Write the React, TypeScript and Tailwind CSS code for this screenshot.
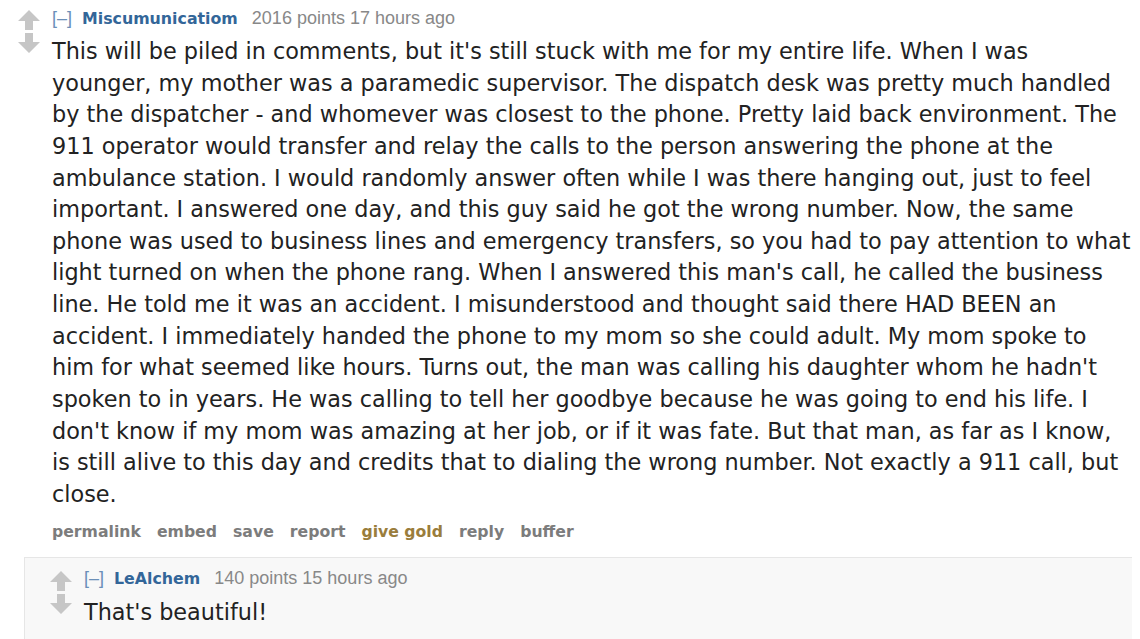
import React from "react";

const body = [
  "This will be piled in comments, but it's still stuck with me for my entire life. When I was",
  "younger, my mother was a paramedic supervisor. The dispatch desk was pretty much handled",
  "by the dispatcher - and whomever was closest to the phone. Pretty laid back environment. The",
  "911 operator would transfer and relay the calls to the person answering the phone at the",
  "ambulance station. I would randomly answer often while I was there hanging out, just to feel",
  "important. I answered one day, and this guy said he got the wrong number. Now, the same",
  "phone was used to business lines and emergency transfers, so you had to pay attention to what",
  "light turned on when the phone rang. When I answered this man's call, he called the business",
  "line. He told me it was an accident. I misunderstood and thought said there HAD BEEN an",
  "accident. I immediately handed the phone to my mom so she could adult. My mom spoke to",
  "him for what seemed like hours. Turns out, the man was calling his daughter whom he hadn't",
  "spoken to in years. He was calling to tell her goodbye because he was going to end his life. I",
  "don't know if my mom was amazing at her job, or if it was fate. But that man, as far as I know,",
  "is still alive to this day and credits that to dialing the wrong number. Not exactly a 911 call, but",
  "close.",
];

const buttons = ["permalink", "embed", "save", "report", "give gold", "reply", "buffer"];

const Arrow = ({ down }: { down?: boolean }) => (
  <svg width="22" height="20" viewBox="0 0 22 20" className={down ? "rotate-180" : ""}>
    <path d="M11 0 L22 11 L15 11 L15 20 L7 20 L7 11 L0 11 Z" fill="#c6c6c6" />
  </svg>
);

const Votes = () => (
  <div className="flex flex-col items-center gap-[3px] w-[22px]">
    <Arrow />
    <Arrow down />
  </div>
);

const Tagline = ({ user, points, time }: { user: string; points: string; time: string }) => (
  <div className="flex items-baseline text-[18px] leading-[20px] font-['Liberation_Sans',sans-serif]">
    <span className="text-[#6b8fb8] mr-[10px]">[–]</span>
    <span className="text-[#336699] font-bold mr-[14px] font-['DejaVu_Sans',sans-serif] text-[15.8px]">{user}</span>
    <span className="text-[#888]">
      {points} points {time}
    </span>
  </div>
);

export default function App() {
  return (
    <div className="w-[1140px] h-[639px] bg-white overflow-hidden text-[#222]">
      <div className="flex pl-[18px] pt-[8px]">
        <div className="pt-[2px]">
          <Votes />
        </div>
        <div className="ml-[12px] flex-1">
          <Tagline user="Miscumunicatiom" points="2016" time="17 hours ago" />
          <div className="mt-[7px] text-[22.35px] leading-[31.64px] font-['DejaVu_Sans',sans-serif]">
            {body.map((l, i) => (
              <div key={i} className="whitespace-nowrap">
                {l}
              </div>
            ))}
          </div>
          <div className="flex gap-[16px] mt-[9px] text-[15.7px] font-bold font-['DejaVu_Sans',sans-serif]">
            {buttons.map((b) => (
              <span key={b} className={b === "give gold" ? "text-[#9a7d3c]" : "text-[#7c7c7c]"}>
                {b}
              </span>
            ))}
          </div>
        </div>
      </div>
      <div className="ml-[24px] mr-[8px] mt-[14px] bg-[#f8f8f8] border border-[#e6e6e6] border-r-0 pt-[10px] pl-[25px] pb-[30px]">
        <div className="flex">
          <div className="pt-[3px]">
            <Votes />
          </div>
          <div className="ml-[12px]">
            <Tagline user="LeAlchem" points="140" time="15 hours ago" />
            <div className="mt-[9px] text-[22.35px] leading-[28px] font-['DejaVu_Sans',sans-serif]">
              That's beautiful!
            </div>
          </div>
        </div>
      </div>
    </div>
  );
}
